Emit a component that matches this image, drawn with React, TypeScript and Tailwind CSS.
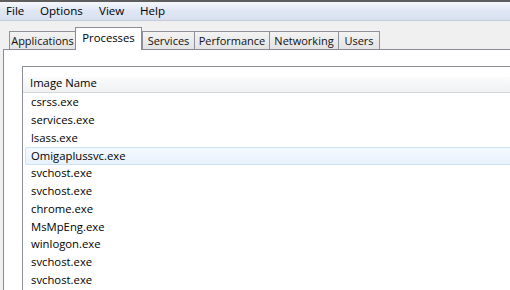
import React from 'react';

const menus = [
    { label: 'File', w: 'w-[34px]' },
    { label: 'Options', w: 'w-[59px]' },
    { label: 'View', w: 'w-[41px]' },
    { label: 'Help', w: 'w-[40px]' },
];

const tabs = [
    { label: 'Applications', w: 'w-[67px]' },
    { label: 'Processes', w: 'w-[67px]', active: true },
    { label: 'Services', w: 'w-[53px]' },
    { label: 'Performance', w: 'w-[76px]' },
    { label: 'Networking', w: 'w-[70px]' },
    { label: 'Users', w: 'w-[42px]' },
];

const processes = [
    'csrss.exe',
    'services.exe',
    'lsass.exe',
    'Omigaplussvc.exe',
    'svchost.exe',
    'svchost.exe',
    'chrome.exe',
    'MsMpEng.exe',
    'winlogon.exe',
    'svchost.exe',
    'svchost.exe',
];

const App = () => {
    return (
        <div className="w-[510px] h-[290px] overflow-hidden bg-[#f0f0f0] text-black text-[11.3px] font-['Open_Sans','Noto_Sans',sans-serif]">
            {/* menu bar */}
            <div className="h-[21px] border-t-2 border-[#5e5e5e] border-b border-b-[#c3cad8] bg-gradient-to-b from-[#f5f7fc] via-[#dfe6f4] to-[#d9e1f1] flex items-center pl-[6px] text-[11.6px]">
                {menus.map((m) => (
                    <span key={m.label} className={`${m.w} leading-[16px] -mt-[1px]`}>
                        {m.label}
                    </span>
                ))}
            </div>

            <div className="pl-[3px] pt-[6px]">
                {/* tabs */}
                <div className="flex items-end h-[22px] pl-[6px] relative z-10 text-[11px]">
                    {tabs.map((t) =>
                        t.active ? (
                            <div
                                key={t.label}
                                className={`${t.w} h-[23px] -mb-[1px] bg-white border border-b-0 border-[#898c95] flex justify-center pt-[1px] leading-[18px] text-[11.3px]`}
                            >
                                {t.label}
                            </div>
                        ) : (
                            <div
                                key={t.label}
                                className={`${t.w} h-[18px] -mr-[1px] bg-gradient-to-b from-[#f3f3f3] to-[#e3e3e3] border border-b-0 border-[#8e919a] flex justify-center leading-[18px] text-[#111]`}
                            >
                                {t.label}
                            </div>
                        )
                    )}
                </div>

                {/* tab panel */}
                <div className="w-[600px] h-[300px] bg-white border-t border-l border-[#898c95] pl-[18px] pt-[16px]">
                    <div className="h-[280px] border-t border-l border-[#8a8e96]">
                        <div className="h-[10px]" />
                        <div className="h-[16px] bg-gradient-to-b from-[#fafbfc] to-[#f0f1f3] border-b border-[#d6d7d9] pl-[7px] leading-[11px]">
                            Image Name
                        </div>
                        <div className="pl-[2px] pt-[1px]">
                            {processes.map((p, i) =>
                                p === 'Omigaplussvc.exe' ? (
                                    <div
                                        key={i}
                                        className="h-[17.75px] bg-gradient-to-b from-[#f4f9fe] to-[#e8f2fd] border border-[#cfe3f7] rounded-[2px] pl-[5px] flex items-center"
                                    >
                                        {p}
                                    </div>
                                ) : (
                                    <div key={i} className="h-[17.75px] pl-[6px] flex items-center">
                                        {p}
                                    </div>
                                )
                            )}
                        </div>
                    </div>
                </div>
            </div>
        </div>
    );
};

export default App;
